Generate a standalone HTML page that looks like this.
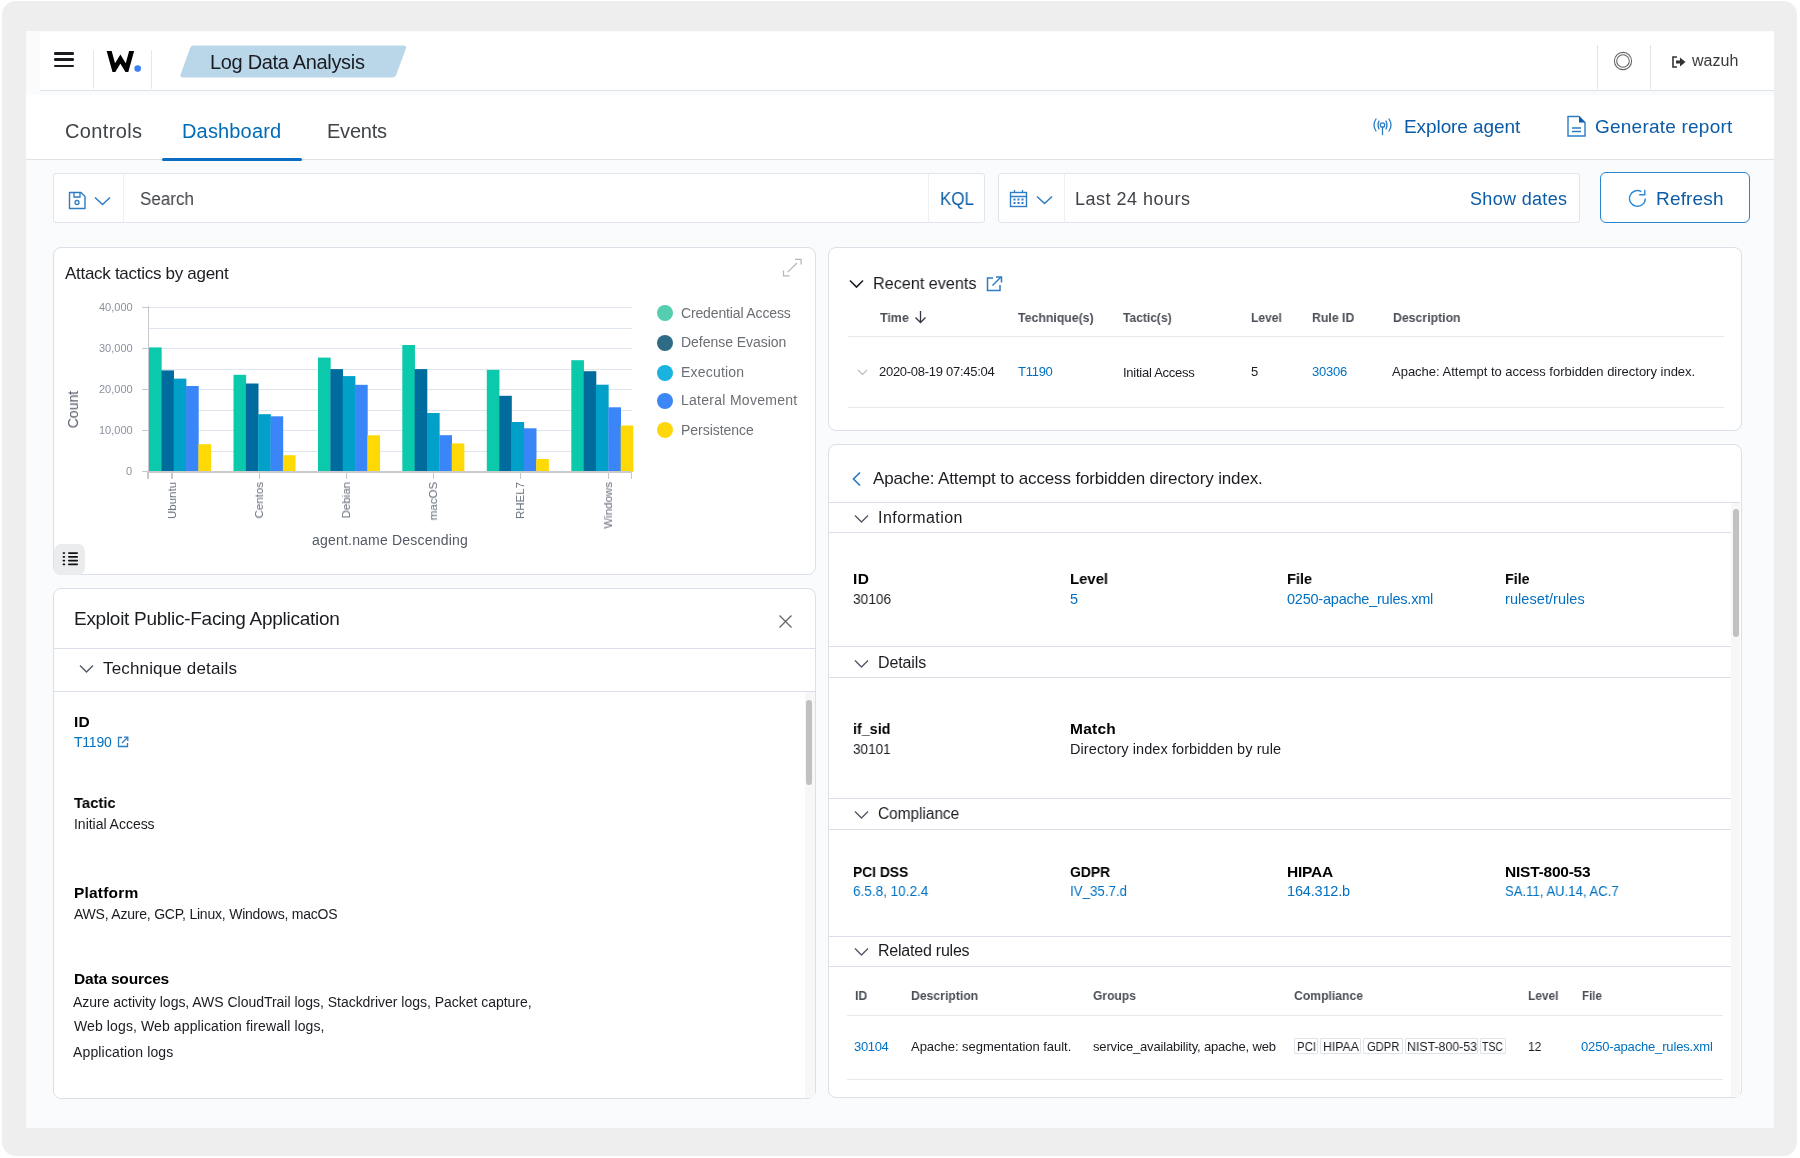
<!DOCTYPE html>
<html><head><meta charset="utf-8"><style>
html,body{margin:0;padding:0;width:1800px;height:1158px;overflow:hidden;background:#fff;font-family:"Liberation Sans", sans-serif;}
span{will-change:transform;}
</style></head><body>
<div style="position:absolute;left:2px;top:1px;width:1795px;height:1155px;background:#eeeeee;border-radius:14px;"></div>
<div style="position:absolute;left:26px;top:31px;width:1748px;height:1097px;background:#fafbfd;border-radius:0px;"></div>
<div style="position:absolute;left:40px;top:32px;width:1734px;height:58px;background:#fff;border-radius:0px;"></div>
<div style="position:absolute;left:40px;top:90px;width:1734px;height:1px;background:#dfe2e6;border-radius:0px;"></div>
<div style="position:absolute;left:93px;top:50px;width:1px;height:39px;background:#e3e7ee;border-radius:0px;"></div>
<div style="position:absolute;left:151px;top:50px;width:1px;height:39px;background:#e3e7ee;border-radius:0px;"></div>
<div style="position:absolute;left:1596.5px;top:45px;width:1.5px;height:44px;background:#e2e2e2;border-radius:0px;"></div>
<div style="position:absolute;left:1649.5px;top:45px;width:1.5px;height:44px;background:#e2e2e2;border-radius:0px;"></div>
<div style="position:absolute;left:54px;top:52px;width:20px;height:2.6000000000000014px;background:#1a1c21;border-radius:1.3px;"></div>
<div style="position:absolute;left:54px;top:58.3px;width:20px;height:2.6000000000000014px;background:#1a1c21;border-radius:1.3px;"></div>
<div style="position:absolute;left:54px;top:64.6px;width:20px;height:2.6000000000000085px;background:#1a1c21;border-radius:1.3px;"></div>
<svg style="position:absolute;left:100px;top:48px;" width="45" height="28" viewBox="0 0 45 28"><defs><clipPath id="wc"><rect x="0" y="3" width="45" height="21"/></clipPath></defs><path clip-path="url(#wc)" d="M8.6 1 L14.2 21.2 L20.4 11 L26.6 21.2 L32.2 1" fill="none" stroke="#000" stroke-width="4.8" stroke-linejoin="miter" stroke-miterlimit="10"/><circle cx="37.7" cy="20.6" r="3.3" fill="#3c7ff2"/></svg>
<svg style="position:absolute;left:178px;top:44px;" width="232" height="36" viewBox="0 0 232 36"><path d="M15.3 1.6 H225.6 Q228.9 1.6 227.9 4.6 L218.2 31 Q217.2 33.6 214.2 33.6 H4.9 Q1.6 33.6 2.6 30.6 L12 4.2 Q12.9 1.6 15.3 1.6Z" fill="#bad7ea"/></svg>
<span id="t0" style="position:absolute;left:210.00px;top:52.00px;font-size:20px;line-height:1;font-weight:400;color:#1a1c21;letter-spacing:-0.325px;white-space:nowrap;">Log Data Analysis</span>
<svg style="position:absolute;left:1612px;top:50px;" width="22" height="22" viewBox="0 0 22 22"><circle cx="11" cy="11" r="8.6" fill="none" stroke="#666" stroke-width="1.1"/><circle cx="11" cy="11" r="6.3" fill="none" stroke="#666" stroke-width="1.1"/></svg>
<svg style="position:absolute;left:1671px;top:55px;" width="16" height="14" viewBox="0 0 16 14"><path d="M6 2 H2 V12 H6" fill="none" stroke="#333" stroke-width="1.6"/><path d="M5 5.5 H9 V2.5 L14.5 7 L9 11.5 V8.5 H5Z" fill="#333"/></svg>
<span id="t1" style="position:absolute;left:1691.70px;top:52.70px;font-size:16px;line-height:1;font-weight:400;color:#3a3a3a;letter-spacing:0.037px;white-space:nowrap;">wazuh</span>
<div style="position:absolute;left:26px;top:95px;width:1748px;height:64px;background:#fff;border-radius:0px;"></div>
<div style="position:absolute;left:26px;top:159px;width:1748px;height:1px;background:#dfe2e6;border-radius:0px;"></div>
<div style="position:absolute;left:162px;top:158px;width:140px;height:3px;background:#0b6cc4;border-radius:1.5px;"></div>
<span id="t2" style="position:absolute;left:65.00px;top:121.30px;font-size:20px;line-height:1;font-weight:400;color:#3f4247;letter-spacing:0.361px;white-space:nowrap;">Controls</span>
<span id="t3" style="position:absolute;left:182.00px;top:121.30px;font-size:20px;line-height:1;font-weight:400;color:#006bb8;letter-spacing:0.160px;white-space:nowrap;">Dashboard</span>
<span id="t4" style="position:absolute;left:327.00px;top:121.30px;font-size:20px;line-height:1;font-weight:400;color:#3f4247;letter-spacing:-0.229px;white-space:nowrap;">Events</span>
<svg style="position:absolute;left:1372px;top:117px;" width="22" height="20" viewBox="0 0 22 20"><g fill="none" stroke="#2d7cc4" stroke-width="1.3" stroke-linecap="round"><path d="M4 2 Q0 8 4 14"/><path d="M7 4 Q5 8 7 12"/><path d="M17 2 Q21 8 17 14"/><path d="M14 4 Q16 8 14 12"/><circle cx="10.5" cy="8" r="2.2"/><path d="M10.5 10.2 V17.5"/></g></svg>
<span id="t5" style="position:absolute;left:1403.75px;top:117.15px;font-size:19px;line-height:1;font-weight:400;color:#0b5ba6;letter-spacing:-0.081px;white-space:nowrap;">Explore agent</span>
<svg style="position:absolute;left:1566px;top:115px;" width="21" height="23" viewBox="0 0 21 23"><path d="M2 1.5 H13 L19 7.5 V21 H2Z" fill="none" stroke="#2d7cc4" stroke-width="1.4"/><path d="M13 1.5 L19 7.5 H13Z" fill="#0b5ba6"/><path d="M6 13 H15 M6 16.5 H15" stroke="#2d7cc4" stroke-width="1.3"/></svg>
<span id="t6" style="position:absolute;left:1595.05px;top:117.15px;font-size:19px;line-height:1;font-weight:400;color:#0b5ba6;letter-spacing:0.225px;white-space:nowrap;">Generate report</span>
<div style="position:absolute;left:53px;top:173px;width:932px;height:50px;background:#fff;border:1px solid #e1e4ea;box-sizing:border-box;border-radius:3px;"></div>
<div style="position:absolute;left:123px;top:174px;width:1px;height:48px;background:#eef0f3;border-radius:0px;"></div>
<div style="position:absolute;left:928px;top:174px;width:1px;height:48px;background:#eef0f3;border-radius:0px;"></div>
<svg style="position:absolute;left:68px;top:191px;" width="19" height="19" viewBox="0 0 19 19"><path d="M1.5 1.5 H13 L17 5.5 V17.5 H1.5Z" fill="none" stroke="#2d7cc4" stroke-width="1.4" stroke-linejoin="round"/><path d="M6 1.5 V6 H12 V1.5" fill="none" stroke="#2d7cc4" stroke-width="1.3"/><circle cx="9" cy="11.5" r="2" fill="none" stroke="#2d7cc4" stroke-width="1.3"/></svg>
<svg style="position:absolute;left:94px;top:196px;" width="17" height="10" viewBox="0 0 17 10"><path d="M1 1.5 L8.5 8.5 L16 1.5" fill="none" stroke="#2d7cc4" stroke-width="1.5"/></svg>
<span id="t7" style="position:absolute;left:140.10px;top:189.50px;font-size:18px;line-height:1;font-weight:400;color:#404348;letter-spacing:0.000px;white-space:nowrap;transform:scaleX(0.9461);transform-origin:0 0;">Search</span>
<span id="t8" style="position:absolute;left:939.50px;top:189.50px;font-size:18px;line-height:1;font-weight:400;color:#0b5ba6;letter-spacing:0.000px;white-space:nowrap;transform:scaleX(0.9427);transform-origin:0 0;">KQL</span>
<div style="position:absolute;left:998px;top:173px;width:582px;height:50px;background:#fff;border:1px solid #e1e4ea;box-sizing:border-box;border-radius:3px;"></div>
<div style="position:absolute;left:1064px;top:174px;width:1px;height:48px;background:#eef0f3;border-radius:0px;"></div>
<svg style="position:absolute;left:1009px;top:189px;" width="19" height="19" viewBox="0 0 19 19"><rect x="1.5" y="3.5" width="16" height="14" fill="none" stroke="#2d7cc4" stroke-width="1.4"/><path d="M1.5 7.5 H17.5 M5.5 1 V4 M13.5 1 V4" stroke="#2d7cc4" stroke-width="1.3"/><g fill="#2d7cc4"><rect x="4.5" y="9.5" width="2" height="2"/><rect x="8.5" y="9.5" width="2" height="2"/><rect x="12.5" y="9.5" width="2" height="2"/><rect x="4.5" y="13" width="2" height="2"/><rect x="8.5" y="13" width="2" height="2"/><rect x="12.5" y="13" width="2" height="2"/></g></svg>
<svg style="position:absolute;left:1036px;top:195px;" width="17" height="10" viewBox="0 0 17 10"><path d="M1 1.5 L8.5 8.5 L16 1.5" fill="none" stroke="#2d7cc4" stroke-width="1.5"/></svg>
<span id="t9" style="position:absolute;left:1075.10px;top:189.50px;font-size:18px;line-height:1;font-weight:400;color:#404348;letter-spacing:0.494px;white-space:nowrap;">Last 24 hours</span>
<span id="t10" style="position:absolute;left:1470.40px;top:189.50px;font-size:18px;line-height:1;font-weight:400;color:#0b5ba6;letter-spacing:0.327px;white-space:nowrap;">Show dates</span>
<div style="position:absolute;left:1600px;top:172px;width:150px;height:51px;background:#fff;border:1.5px solid #2a86d0;box-sizing:border-box;border-radius:6px;"></div>
<svg style="position:absolute;left:1628px;top:188px;" width="20" height="20" viewBox="0 0 20 20"><path d="M13.35 3.56 A7.9 7.9 0 1 0 17.3 10.4" fill="none" stroke="#2d8ad6" stroke-width="1.4"/><path d="M16.8 1.8 V6.8 H11.2" fill="none" stroke="#2d8ad6" stroke-width="1.4"/></svg>
<span id="t11" style="position:absolute;left:1656.45px;top:188.85px;font-size:19px;line-height:1;font-weight:400;color:#0b5ba6;letter-spacing:0.173px;white-space:nowrap;">Refresh</span>
<div style="position:absolute;left:53px;top:247px;width:763px;height:328px;background:#fff;border:1px solid #dbe0e8;box-sizing:border-box;border-radius:8px;"></div>
<span id="t12" style="position:absolute;left:64.95px;top:265.15px;font-size:17px;line-height:1;font-weight:400;color:#1a1c21;letter-spacing:-0.289px;white-space:nowrap;">Attack tactics by agent</span>
<svg style="position:absolute;left:781px;top:258px;" width="22" height="22" viewBox="0 0 22 22"><g fill="none" stroke="#b4b6b9" stroke-width="1.25"><path d="M16 5 L6.6 14.1"/><path d="M13.9 1.3 H20.1 V6.5"/><path d="M2.5 12.5 V17.9 H8.7"/></g></svg>
<div style="position:absolute;left:148px;top:306.7px;width:484px;height:1.1999999999999886px;background:#dfe5ef;border-radius:0px;"></div>
<div style="position:absolute;left:148px;top:327.6px;width:484px;height:1.1999999999999886px;background:#dfe5ef;border-radius:0px;"></div>
<div style="position:absolute;left:148px;top:347.7px;width:484px;height:1.1999999999999886px;background:#dfe5ef;border-radius:0px;"></div>
<div style="position:absolute;left:148px;top:368.6px;width:484px;height:1.1999999999999886px;background:#dfe5ef;border-radius:0px;"></div>
<div style="position:absolute;left:148px;top:388.9px;width:484px;height:1.1999999999999886px;background:#dfe5ef;border-radius:0px;"></div>
<div style="position:absolute;left:148px;top:409.6px;width:484px;height:1.1999999999999886px;background:#dfe5ef;border-radius:0px;"></div>
<div style="position:absolute;left:148px;top:430.1px;width:484px;height:1.1999999999999886px;background:#dfe5ef;border-radius:0px;"></div>
<div style="position:absolute;left:148px;top:450.6px;width:484px;height:1.1999999999999886px;background:#dfe5ef;border-radius:0px;"></div>
<div style="position:absolute;left:147.5px;top:306px;width:1.5px;height:166px;background:#c6c8cc;border-radius:0px;"></div>
<div style="position:absolute;left:142px;top:306.7px;width:6px;height:1.1999999999999886px;background:#c6c8cc;border-radius:0px;"></div>
<div style="position:absolute;left:142px;top:347.7px;width:6px;height:1.1999999999999886px;background:#c6c8cc;border-radius:0px;"></div>
<div style="position:absolute;left:142px;top:388.9px;width:6px;height:1.1999999999999886px;background:#c6c8cc;border-radius:0px;"></div>
<div style="position:absolute;left:142px;top:430.1px;width:6px;height:1.1999999999999886px;background:#c6c8cc;border-radius:0px;"></div>
<div style="position:absolute;left:142px;top:471.1px;width:6px;height:1.1999999999999886px;background:#c6c8cc;border-radius:0px;"></div>
<span style="position:absolute;right:1667.5px;top:301.0px;font-size:11px;line-height:13px;color:#8a919e;white-space:nowrap">40,000</span>
<span style="position:absolute;right:1667.5px;top:342.0px;font-size:11px;line-height:13px;color:#8a919e;white-space:nowrap">30,000</span>
<span style="position:absolute;right:1667.5px;top:383.0px;font-size:11px;line-height:13px;color:#8a919e;white-space:nowrap">20,000</span>
<span style="position:absolute;right:1667.5px;top:424.0px;font-size:11px;line-height:13px;color:#8a919e;white-space:nowrap">10,000</span>
<span style="position:absolute;right:1667.5px;top:465.3px;font-size:11px;line-height:13px;color:#8a919e;white-space:nowrap">0</span>
<svg style="position:absolute;left:140px;top:300px;" width="500" height="180" viewBox="0 0 500 180"><rect x="9.00" y="47.40" width="12.65" height="124.60" fill="#0bc9ab"/><rect x="21.35" y="70.40" width="12.65" height="101.60" fill="#006c9d"/><rect x="33.70" y="78.60" width="12.65" height="93.40" fill="#00a0c9"/><rect x="46.05" y="86.00" width="12.65" height="86.00" fill="#3a86f8"/><rect x="58.40" y="144.20" width="12.65" height="27.80" fill="#fed906"/><rect x="93.50" y="74.80" width="12.65" height="97.20" fill="#0bc9ab"/><rect x="105.85" y="83.50" width="12.65" height="88.50" fill="#006c9d"/><rect x="118.20" y="114.20" width="12.65" height="57.80" fill="#00a0c9"/><rect x="130.55" y="116.30" width="12.65" height="55.70" fill="#3a86f8"/><rect x="142.90" y="155.20" width="12.65" height="16.80" fill="#fed906"/><rect x="178.00" y="57.60" width="12.65" height="114.40" fill="#0bc9ab"/><rect x="190.35" y="69.10" width="12.65" height="102.90" fill="#006c9d"/><rect x="202.70" y="76.10" width="12.65" height="95.90" fill="#00a0c9"/><rect x="215.05" y="84.80" width="12.65" height="87.20" fill="#3a86f8"/><rect x="227.40" y="135.30" width="12.65" height="36.70" fill="#fed906"/><rect x="262.30" y="45.00" width="12.65" height="127.00" fill="#0bc9ab"/><rect x="274.65" y="69.10" width="12.65" height="102.90" fill="#006c9d"/><rect x="287.00" y="113.00" width="12.65" height="59.00" fill="#00a0c9"/><rect x="299.35" y="135.20" width="12.65" height="36.80" fill="#3a86f8"/><rect x="311.70" y="143.40" width="12.65" height="28.60" fill="#fed906"/><rect x="346.80" y="69.90" width="12.65" height="102.10" fill="#0bc9ab"/><rect x="359.15" y="95.80" width="12.65" height="76.20" fill="#006c9d"/><rect x="371.50" y="122.00" width="12.65" height="50.00" fill="#00a0c9"/><rect x="383.85" y="128.30" width="12.65" height="43.70" fill="#3a86f8"/><rect x="396.20" y="159.00" width="12.65" height="13.00" fill="#fed906"/><rect x="431.30" y="60.20" width="12.65" height="111.80" fill="#0bc9ab"/><rect x="443.65" y="71.20" width="12.65" height="100.80" fill="#006c9d"/><rect x="456.00" y="84.70" width="12.65" height="87.30" fill="#00a0c9"/><rect x="468.35" y="107.30" width="12.65" height="64.70" fill="#3a86f8"/><rect x="480.70" y="125.50" width="12.65" height="46.50" fill="#fed906"/></svg>
<div style="position:absolute;left:148px;top:471.2px;width:484px;height:1.3999999999999773px;background:#c9cacc;border-radius:0px;"></div>
<div style="position:absolute;left:147.4px;top:472px;width:1.1999999999999886px;height:7px;background:#c6c8cc;border-radius:0px;"></div>
<div style="position:absolute;left:171.4px;top:472px;width:1.1999999999999886px;height:7px;background:#c6c8cc;border-radius:0px;"></div>
<div style="position:absolute;left:258.7px;top:472px;width:1.1999999999999886px;height:7px;background:#c6c8cc;border-radius:0px;"></div>
<div style="position:absolute;left:345.79999999999995px;top:472px;width:1.1999999999999886px;height:7px;background:#c6c8cc;border-radius:0px;"></div>
<div style="position:absolute;left:432.9px;top:472px;width:1.1999999999999886px;height:7px;background:#c6c8cc;border-radius:0px;"></div>
<div style="position:absolute;left:520.1px;top:472px;width:1.2000000000000455px;height:7px;background:#c6c8cc;border-radius:0px;"></div>
<div style="position:absolute;left:607.6px;top:472px;width:1.2000000000000455px;height:7px;background:#c6c8cc;border-radius:0px;"></div>
<div style="position:absolute;left:630.9px;top:472px;width:1.2000000000000455px;height:7px;background:#c6c8cc;border-radius:0px;"></div>
<span style="position:absolute;left:165.5px;top:482px;width:13px;font-size:11.5px;line-height:13px;color:#69707d;white-space:nowrap;writing-mode:vertical-rl;transform:rotate(180deg);">Ubuntu</span>
<span style="position:absolute;left:252.8px;top:482px;width:13px;font-size:11.5px;line-height:13px;color:#69707d;white-space:nowrap;writing-mode:vertical-rl;transform:rotate(180deg);">Centos</span>
<span style="position:absolute;left:339.9px;top:482px;width:13px;font-size:11.5px;line-height:13px;color:#69707d;white-space:nowrap;writing-mode:vertical-rl;transform:rotate(180deg);">Debian</span>
<span style="position:absolute;left:427.0px;top:482px;width:13px;font-size:11.5px;line-height:13px;color:#69707d;white-space:nowrap;writing-mode:vertical-rl;transform:rotate(180deg);">macOS</span>
<span style="position:absolute;left:514.2px;top:482px;width:13px;font-size:11.5px;line-height:13px;color:#69707d;white-space:nowrap;writing-mode:vertical-rl;transform:rotate(180deg);">RHEL7</span>
<span style="position:absolute;left:601.7px;top:482px;width:13px;font-size:11.5px;line-height:13px;color:#69707d;white-space:nowrap;writing-mode:vertical-rl;transform:rotate(180deg);">Windows</span>
<span style="position:absolute;left:66px;top:391px;width:14px;font-size:14px;line-height:14px;color:#535966;white-space:nowrap;writing-mode:vertical-rl;transform:rotate(180deg);">Count</span>
<span id="t13" style="position:absolute;left:312.30px;top:533.10px;font-size:14px;line-height:1;font-weight:400;color:#535966;letter-spacing:0.201px;white-space:nowrap;">agent.name Descending</span>
<div style="position:absolute;left:657px;top:305.4px;width:16px;height:16.0px;background:#54cdb0;border-radius:8px;"></div>
<span id="t14" style="position:absolute;left:680.80px;top:305.80px;font-size:14px;line-height:1;font-weight:400;color:#6b6e73;letter-spacing:-0.145px;white-space:nowrap;">Credential Access</span>
<div style="position:absolute;left:657px;top:334.8px;width:16px;height:16.0px;background:#2e6b86;border-radius:8px;"></div>
<span id="t15" style="position:absolute;left:680.80px;top:335.20px;font-size:14px;line-height:1;font-weight:400;color:#6b6e73;letter-spacing:-0.032px;white-space:nowrap;">Defense Evasion</span>
<div style="position:absolute;left:657px;top:365px;width:16px;height:16px;background:#1ab3e0;border-radius:8px;"></div>
<span id="t16" style="position:absolute;left:680.80px;top:365.40px;font-size:14px;line-height:1;font-weight:400;color:#6b6e73;letter-spacing:0.200px;white-space:nowrap;">Execution</span>
<div style="position:absolute;left:657px;top:392.8px;width:16px;height:16.0px;background:#3d86f5;border-radius:8px;"></div>
<span id="t17" style="position:absolute;left:680.80px;top:393.20px;font-size:14px;line-height:1;font-weight:400;color:#6b6e73;letter-spacing:0.276px;white-space:nowrap;">Lateral Movement</span>
<div style="position:absolute;left:657px;top:422.2px;width:16px;height:16.0px;background:#fdd60c;border-radius:8px;"></div>
<span id="t18" style="position:absolute;left:680.80px;top:422.60px;font-size:14px;line-height:1;font-weight:400;color:#6b6e73;letter-spacing:-0.036px;white-space:nowrap;">Persistence</span>
<div style="position:absolute;left:53.5px;top:543.5px;width:31.0px;height:31.0px;background:#ebeced;border-radius:7px;"></div>
<svg style="position:absolute;left:60px;top:550px;" width="20" height="18" viewBox="0 0 20 18"><g fill="#111"><rect x="2.6" y="2.2" width="2.6" height="1.7" rx="0.8"/><rect x="2.6" y="6" width="2.6" height="1.7" rx="0.8"/><rect x="2.6" y="9.8" width="2.6" height="1.7" rx="0.8"/><rect x="2.6" y="13.6" width="2.6" height="1.7" rx="0.8"/><rect x="8" y="2.2" width="10" height="1.7" rx="0.8"/><rect x="8" y="6" width="10" height="1.7" rx="0.8"/><rect x="8" y="9.8" width="10" height="1.7" rx="0.8"/><rect x="8" y="13.6" width="10" height="1.7" rx="0.8"/></g></svg>
<div style="position:absolute;left:828px;top:247px;width:914px;height:184px;background:#fff;border:1px solid #dbe0e8;box-sizing:border-box;border-radius:8px;"></div>
<svg style="position:absolute;left:849px;top:279px;" width="15" height="10" viewBox="0 0 15 10"><path d="M1 1.5 L7.5 8 L14 1.5" fill="none" stroke="#1a1c21" stroke-width="1.6"/></svg>
<span id="t19" style="position:absolute;left:873.15px;top:274.85px;font-size:17px;line-height:1;font-weight:400;color:#1a1c21;letter-spacing:0.000px;white-space:nowrap;transform:scaleX(0.9517);transform-origin:0 0;">Recent events</span>
<svg style="position:absolute;left:986px;top:276px;" width="17" height="16" viewBox="0 0 17 16"><g fill="none" stroke="#2d7cc4" stroke-width="1.5"><path d="M7 2 H1.5 V14.5 H14 V9"/><path d="M6.5 9.5 L15 1"/><path d="M10 1 H15.5 V6.5"/></g></svg>
<span id="t20" style="position:absolute;left:880.15px;top:310.95px;font-size:13px;line-height:1;font-weight:700;color:#4a4e56;letter-spacing:0.000px;white-space:nowrap;transform:scaleX(0.9539);transform-origin:0 0;">Time</span>
<span id="t21" style="position:absolute;left:1018.05px;top:310.95px;font-size:13px;line-height:1;font-weight:700;color:#4a4e56;letter-spacing:0.000px;white-space:nowrap;transform:scaleX(0.9472);transform-origin:0 0;">Technique(s)</span>
<span id="t22" style="position:absolute;left:1122.55px;top:310.95px;font-size:13px;line-height:1;font-weight:700;color:#4a4e56;letter-spacing:0.000px;white-space:nowrap;transform:scaleX(0.9259);transform-origin:0 0;">Tactic(s)</span>
<span id="t23" style="position:absolute;left:1251.35px;top:310.95px;font-size:13px;line-height:1;font-weight:700;color:#4a4e56;letter-spacing:0.000px;white-space:nowrap;transform:scaleX(0.9224);transform-origin:0 0;">Level</span>
<span id="t24" style="position:absolute;left:1311.55px;top:310.95px;font-size:13px;line-height:1;font-weight:700;color:#4a4e56;letter-spacing:0.000px;white-space:nowrap;transform:scaleX(0.9438);transform-origin:0 0;">Rule ID</span>
<span id="t25" style="position:absolute;left:1393.35px;top:310.95px;font-size:13px;line-height:1;font-weight:700;color:#4a4e56;letter-spacing:0.000px;white-space:nowrap;transform:scaleX(0.9445);transform-origin:0 0;">Description</span>
<svg style="position:absolute;left:914px;top:310px;" width="13" height="14" viewBox="0 0 13 14"><path d="M6.5 1 V12.5 M1.5 7.5 L6.5 12.5 L11.5 7.5" fill="none" stroke="#343741" stroke-width="1.3"/></svg>
<div style="position:absolute;left:848px;top:336px;width:876px;height:1px;background:#e6e8eb;border-radius:0px;"></div>
<svg style="position:absolute;left:857px;top:369px;" width="11" height="7" viewBox="0 0 11 7"><path d="M1 1 L5.5 5.5 L10 1" fill="none" stroke="#b8bcc4" stroke-width="1.2"/></svg>
<span id="t26" style="position:absolute;left:879.35px;top:365.45px;font-size:13px;line-height:1;font-weight:400;color:#1a1c21;letter-spacing:-0.277px;white-space:nowrap;">2020-08-19 07:45:04</span>
<span id="t27" style="position:absolute;left:1018.05px;top:365.45px;font-size:13px;line-height:1;font-weight:400;color:#0071c2;letter-spacing:-0.267px;white-space:nowrap;">T1190</span>
<span id="t28" style="position:absolute;left:1122.55px;top:366.25px;font-size:13px;line-height:1;font-weight:400;color:#1a1c21;letter-spacing:-0.259px;white-space:nowrap;">Initial Access</span>
<span id="t29" style="position:absolute;left:1251.35px;top:365.45px;font-size:13px;line-height:1;font-weight:400;color:#1a1c21;letter-spacing:0.000px;white-space:nowrap;">5</span>
<span id="t30" style="position:absolute;left:1311.55px;top:365.45px;font-size:13px;line-height:1;font-weight:400;color:#0071c2;letter-spacing:-0.230px;white-space:nowrap;">30306</span>
<span id="t31" style="position:absolute;left:1392.45px;top:365.45px;font-size:13px;line-height:1;font-weight:400;color:#1a1c21;letter-spacing:-0.006px;white-space:nowrap;">Apache: Attempt to access forbidden directory index.</span>
<div style="position:absolute;left:848px;top:407px;width:876px;height:1px;background:#e6e8eb;border-radius:0px;"></div>
<div style="position:absolute;left:828px;top:443.5px;width:914px;height:654.5px;background:#fff;border:1px solid #dbe0e8;box-sizing:border-box;border-radius:8px;"></div>
<svg style="position:absolute;left:851px;top:471px;" width="11" height="16" viewBox="0 0 11 16"><path d="M9 1.5 L2.5 8 L9 14.5" fill="none" stroke="#2d7cc4" stroke-width="1.7"/></svg>
<span id="t32" style="position:absolute;left:873.25px;top:469.55px;font-size:17px;line-height:1;font-weight:400;color:#1a1c21;letter-spacing:-0.139px;white-space:nowrap;">Apache: Attempt to access forbidden directory index.</span>
<div style="position:absolute;left:829px;top:502px;width:911px;height:1px;background:#dbe0e8;border-radius:0px;"></div>
<div style="position:absolute;left:1731px;top:503px;width:9px;height:594px;background:#f7f7f7;border-radius:0px;"></div>
<div style="position:absolute;left:1733px;top:509px;width:6px;height:128px;background:#c1c1c1;border-radius:3px;"></div>
<div style="position:absolute;left:829px;top:532px;width:902px;height:1px;background:#dbe0e8;border-radius:0px;"></div>
<svg style="position:absolute;left:854px;top:513.5px;" width="15" height="10" viewBox="0 0 15 10"><path d="M1 1.5 L7.5 8 L14 1.5" fill="none" stroke="#535966" stroke-width="1.4"/></svg>
<span id="t33" style="position:absolute;left:877.90px;top:509.90px;font-size:16px;line-height:1;font-weight:400;color:#1a1c21;letter-spacing:0.446px;white-space:nowrap;">Information</span>
<div style="position:absolute;left:829px;top:646px;width:902px;height:1px;background:#dbe0e8;border-radius:0px;"></div>
<div style="position:absolute;left:829px;top:677px;width:902px;height:1px;background:#dbe0e8;border-radius:0px;"></div>
<svg style="position:absolute;left:854px;top:658.8px;" width="15" height="10" viewBox="0 0 15 10"><path d="M1 1.5 L7.5 8 L14 1.5" fill="none" stroke="#535966" stroke-width="1.4"/></svg>
<span id="t34" style="position:absolute;left:877.90px;top:655.20px;font-size:16px;line-height:1;font-weight:400;color:#1a1c21;letter-spacing:-0.118px;white-space:nowrap;">Details</span>
<div style="position:absolute;left:829px;top:798px;width:902px;height:1px;background:#dbe0e8;border-radius:0px;"></div>
<div style="position:absolute;left:829px;top:829px;width:902px;height:1px;background:#dbe0e8;border-radius:0px;"></div>
<svg style="position:absolute;left:854px;top:809.9px;" width="15" height="10" viewBox="0 0 15 10"><path d="M1 1.5 L7.5 8 L14 1.5" fill="none" stroke="#535966" stroke-width="1.4"/></svg>
<span id="t35" style="position:absolute;left:877.90px;top:806.30px;font-size:16px;line-height:1;font-weight:400;color:#1a1c21;letter-spacing:0.000px;white-space:nowrap;transform:scaleX(0.9612);transform-origin:0 0;">Compliance</span>
<div style="position:absolute;left:829px;top:936px;width:902px;height:1px;background:#dbe0e8;border-radius:0px;"></div>
<div style="position:absolute;left:829px;top:966px;width:902px;height:1px;background:#dbe0e8;border-radius:0px;"></div>
<svg style="position:absolute;left:854px;top:946.7px;" width="15" height="10" viewBox="0 0 15 10"><path d="M1 1.5 L7.5 8 L14 1.5" fill="none" stroke="#535966" stroke-width="1.4"/></svg>
<span id="t36" style="position:absolute;left:877.90px;top:943.10px;font-size:16px;line-height:1;font-weight:400;color:#1a1c21;letter-spacing:-0.223px;white-space:nowrap;">Related rules</span>
<span id="t37" style="position:absolute;left:853.23px;top:571.33px;font-size:15.5px;line-height:1;font-weight:700;color:#000;letter-spacing:0.494px;white-space:nowrap;">ID</span>
<span id="t38" style="position:absolute;left:853.27px;top:592.47px;font-size:14.5px;line-height:1;font-weight:400;color:#1a1c21;letter-spacing:0.000px;white-space:nowrap;transform:scaleX(0.9439);transform-origin:0 0;">30106</span>
<span id="t39" style="position:absolute;left:1070.42px;top:571.33px;font-size:15.5px;line-height:1;font-weight:700;color:#000;letter-spacing:0.000px;white-space:nowrap;transform:scaleX(0.9601);transform-origin:0 0;">Level</span>
<span id="t40" style="position:absolute;left:1070.48px;top:592.47px;font-size:14.5px;line-height:1;font-weight:400;color:#0071c2;letter-spacing:0.000px;white-space:nowrap;">5</span>
<span id="t41" style="position:absolute;left:1287.22px;top:571.33px;font-size:15.5px;line-height:1;font-weight:700;color:#000;letter-spacing:0.000px;white-space:nowrap;transform:scaleX(0.9394);transform-origin:0 0;">File</span>
<span id="t42" style="position:absolute;left:1287.28px;top:592.47px;font-size:14.5px;line-height:1;font-weight:400;color:#0071c2;letter-spacing:-0.225px;white-space:nowrap;">0250-apache_rules.xml</span>
<span id="t43" style="position:absolute;left:1504.52px;top:571.33px;font-size:15.5px;line-height:1;font-weight:700;color:#000;letter-spacing:0.000px;white-space:nowrap;transform:scaleX(0.9202);transform-origin:0 0;">File</span>
<span id="t44" style="position:absolute;left:1504.58px;top:592.47px;font-size:14.5px;line-height:1;font-weight:400;color:#0071c2;letter-spacing:0.064px;white-space:nowrap;">ruleset/rules</span>
<span id="t45" style="position:absolute;left:853.23px;top:721.33px;font-size:15.5px;line-height:1;font-weight:700;color:#000;letter-spacing:0.000px;white-space:nowrap;transform:scaleX(0.9253);transform-origin:0 0;">if_sid</span>
<span id="t46" style="position:absolute;left:853.27px;top:742.17px;font-size:14.5px;line-height:1;font-weight:400;color:#1a1c21;letter-spacing:0.000px;white-space:nowrap;transform:scaleX(0.9315);transform-origin:0 0;">30101</span>
<span id="t47" style="position:absolute;left:1070.42px;top:721.33px;font-size:15.5px;line-height:1;font-weight:700;color:#000;letter-spacing:0.247px;white-space:nowrap;">Match</span>
<span id="t48" style="position:absolute;left:1070.48px;top:742.17px;font-size:14.5px;line-height:1;font-weight:400;color:#1a1c21;letter-spacing:0.073px;white-space:nowrap;">Directory index forbidden by rule</span>
<span id="t49" style="position:absolute;left:853.23px;top:863.53px;font-size:15.5px;line-height:1;font-weight:700;color:#000;letter-spacing:0.000px;white-space:nowrap;transform:scaleX(0.8900);transform-origin:0 0;">PCI DSS</span>
<span id="t50" style="position:absolute;left:853.27px;top:883.57px;font-size:14.5px;line-height:1;font-weight:400;color:#0071c2;letter-spacing:0.000px;white-space:nowrap;transform:scaleX(0.9347);transform-origin:0 0;">6.5.8, 10.2.4</span>
<span id="t51" style="position:absolute;left:1070.42px;top:863.53px;font-size:15.5px;line-height:1;font-weight:700;color:#000;letter-spacing:0.000px;white-space:nowrap;transform:scaleX(0.8971);transform-origin:0 0;">GDPR</span>
<span id="t52" style="position:absolute;left:1070.48px;top:883.57px;font-size:14.5px;line-height:1;font-weight:400;color:#0071c2;letter-spacing:0.000px;white-space:nowrap;transform:scaleX(0.9178);transform-origin:0 0;">IV_35.7.d</span>
<span id="t53" style="position:absolute;left:1287.22px;top:863.53px;font-size:15.5px;line-height:1;font-weight:700;color:#000;letter-spacing:-0.220px;white-space:nowrap;">HIPAA</span>
<span id="t54" style="position:absolute;left:1287.28px;top:883.57px;font-size:14.5px;line-height:1;font-weight:400;color:#0071c2;letter-spacing:-0.180px;white-space:nowrap;">164.312.b</span>
<span id="t55" style="position:absolute;left:1504.52px;top:863.53px;font-size:15.5px;line-height:1;font-weight:700;color:#000;letter-spacing:-0.226px;white-space:nowrap;">NIST-800-53</span>
<span id="t56" style="position:absolute;left:1504.58px;top:883.57px;font-size:14.5px;line-height:1;font-weight:400;color:#0071c2;letter-spacing:0.000px;white-space:nowrap;transform:scaleX(0.9054);transform-origin:0 0;">SA.11, AU.14, AC.7</span>
<span id="t57" style="position:absolute;left:855.35px;top:989.45px;font-size:13px;line-height:1;font-weight:700;color:#4a4e56;letter-spacing:0.000px;white-space:nowrap;transform:scaleX(0.9515);transform-origin:0 0;">ID</span>
<span id="t58" style="position:absolute;left:910.85px;top:989.45px;font-size:13px;line-height:1;font-weight:700;color:#4a4e56;letter-spacing:0.000px;white-space:nowrap;transform:scaleX(0.9389);transform-origin:0 0;">Description</span>
<span id="t59" style="position:absolute;left:1092.65px;top:989.45px;font-size:13px;line-height:1;font-weight:700;color:#4a4e56;letter-spacing:0.000px;white-space:nowrap;transform:scaleX(0.9284);transform-origin:0 0;">Groups</span>
<span id="t60" style="position:absolute;left:1294.35px;top:989.45px;font-size:13px;line-height:1;font-weight:700;color:#4a4e56;letter-spacing:0.000px;white-space:nowrap;transform:scaleX(0.9366);transform-origin:0 0;">Compliance</span>
<span id="t61" style="position:absolute;left:1527.75px;top:989.45px;font-size:13px;line-height:1;font-weight:700;color:#4a4e56;letter-spacing:0.000px;white-space:nowrap;transform:scaleX(0.9132);transform-origin:0 0;">Level</span>
<span id="t62" style="position:absolute;left:1581.85px;top:989.45px;font-size:13px;line-height:1;font-weight:700;color:#4a4e56;letter-spacing:0.000px;white-space:nowrap;transform:scaleX(0.8843);transform-origin:0 0;">File</span>
<div style="position:absolute;left:847px;top:1015px;width:876px;height:1px;background:#e6e8eb;border-radius:0px;"></div>
<span id="t63" style="position:absolute;left:854.05px;top:1039.95px;font-size:13px;line-height:1;font-weight:400;color:#0071c2;letter-spacing:-0.330px;white-space:nowrap;">30104</span>
<span id="t64" style="position:absolute;left:910.85px;top:1039.95px;font-size:13px;line-height:1;font-weight:400;color:#1a1c21;letter-spacing:-0.033px;white-space:nowrap;">Apache: segmentation fault.</span>
<span id="t65" style="position:absolute;left:1092.65px;top:1039.95px;font-size:13px;line-height:1;font-weight:400;color:#1a1c21;letter-spacing:-0.170px;white-space:nowrap;">service_availability, apache, web</span>
<div style="position:absolute;left:1294.4px;top:1038px;width:24.0px;height:16px;background:#fff;border:1px solid #dfe3ea;box-sizing:border-box;border-radius:1px;"></div>
<span id="t66" style="position:absolute;left:1297.25px;top:1039.95px;font-size:13px;line-height:1;font-weight:400;color:#1a1c21;letter-spacing:0.000px;white-space:nowrap;transform:scaleX(0.8774);transform-origin:0 0;">PCI</span>
<div style="position:absolute;left:1320.4px;top:1038px;width:40.5px;height:16px;background:#fff;border:1px solid #dfe3ea;box-sizing:border-box;border-radius:1px;"></div>
<span id="t67" style="position:absolute;left:1322.75px;top:1039.95px;font-size:13px;line-height:1;font-weight:400;color:#1a1c21;letter-spacing:0.000px;white-space:nowrap;transform:scaleX(0.9418);transform-origin:0 0;">HIPAA</span>
<div style="position:absolute;left:1363.2px;top:1038px;width:40.200000000000045px;height:16px;background:#fff;border:1px solid #dfe3ea;box-sizing:border-box;border-radius:1px;"></div>
<span id="t68" style="position:absolute;left:1366.65px;top:1039.95px;font-size:13px;line-height:1;font-weight:400;color:#1a1c21;letter-spacing:0.000px;white-space:nowrap;transform:scaleX(0.8609);transform-origin:0 0;">GDPR</span>
<div style="position:absolute;left:1405.1px;top:1038px;width:72.80000000000018px;height:16px;background:#fff;border:1px solid #dfe3ea;box-sizing:border-box;border-radius:1px;"></div>
<span id="t69" style="position:absolute;left:1407.05px;top:1039.95px;font-size:13px;line-height:1;font-weight:400;color:#1a1c21;letter-spacing:0.000px;white-space:nowrap;transform:scaleX(0.9493);transform-origin:0 0;">NIST-800-53</span>
<div style="position:absolute;left:1480px;top:1038px;width:25.90000000000009px;height:16px;background:#fff;border:1px solid #dfe3ea;box-sizing:border-box;border-radius:1px;"></div>
<span id="t70" style="position:absolute;left:1481.65px;top:1039.95px;font-size:13px;line-height:1;font-weight:400;color:#1a1c21;letter-spacing:0.000px;white-space:nowrap;transform:scaleX(0.8082);transform-origin:0 0;">TSC</span>
<span id="t71" style="position:absolute;left:1527.75px;top:1039.95px;font-size:13px;line-height:1;font-weight:400;color:#1a1c21;letter-spacing:0.000px;white-space:nowrap;transform:scaleX(0.9206);transform-origin:0 0;">12</span>
<span id="t72" style="position:absolute;left:1581.25px;top:1039.95px;font-size:13px;line-height:1;font-weight:400;color:#0071c2;letter-spacing:-0.162px;white-space:nowrap;">0250-apache_rules.xml</span>
<div style="position:absolute;left:847px;top:1079px;width:876px;height:1px;background:#e6e8eb;border-radius:0px;"></div>
<div style="position:absolute;left:53px;top:588px;width:763px;height:511px;background:#fff;border:1px solid #dbe0e8;box-sizing:border-box;border-radius:8px;"></div>
<span id="t73" style="position:absolute;left:73.65px;top:609.45px;font-size:19px;line-height:1;font-weight:400;color:#1a1c21;letter-spacing:-0.274px;white-space:nowrap;">Exploit Public-Facing Application</span>
<svg style="position:absolute;left:778px;top:614px;" width="15" height="15" viewBox="0 0 15 15"><path d="M1.5 1.5 L13.5 13.5 M13.5 1.5 L1.5 13.5" stroke="#666" stroke-width="1.3"/></svg>
<div style="position:absolute;left:54px;top:648px;width:761px;height:1px;background:#dbe0e8;border-radius:0px;"></div>
<svg style="position:absolute;left:79px;top:664px;" width="15" height="10" viewBox="0 0 15 10"><path d="M1 1.5 L7.5 8 L14 1.5" fill="none" stroke="#535966" stroke-width="1.4"/></svg>
<span id="t74" style="position:absolute;left:103.25px;top:660.05px;font-size:17px;line-height:1;font-weight:400;color:#1a1c21;letter-spacing:0.164px;white-space:nowrap;">Technique details</span>
<div style="position:absolute;left:54px;top:691px;width:761px;height:1px;background:#dbe0e8;border-radius:0px;"></div>
<div style="position:absolute;left:805px;top:692px;width:10px;height:406px;background:#f7f7f7;border-radius:0px;"></div>
<div style="position:absolute;left:806px;top:700px;width:6px;height:85px;background:#c1c1c1;border-radius:3px;"></div>
<span id="t75" style="position:absolute;left:74.22px;top:714.03px;font-size:15.5px;line-height:1;font-weight:700;color:#000;letter-spacing:0.294px;white-space:nowrap;">ID</span>
<span id="t76" style="position:absolute;left:74.30px;top:735.40px;font-size:14px;line-height:1;font-weight:400;color:#0071c2;letter-spacing:-0.218px;white-space:nowrap;">T1190</span>
<svg style="position:absolute;left:117px;top:736px;" width="12" height="12" viewBox="0 0 12 12"><g fill="none" stroke="#2d7cc4" stroke-width="1.3"><path d="M5 1.5 H1.5 V10.5 H10.5 V7"/><path d="M5 7 L10.5 1.5"/><path d="M7 1.2 H10.8 V5"/></g></svg>
<span id="t77" style="position:absolute;left:74.22px;top:795.03px;font-size:15.5px;line-height:1;font-weight:700;color:#000;letter-spacing:0.000px;white-space:nowrap;transform:scaleX(0.9540);transform-origin:0 0;">Tactic</span>
<span id="t78" style="position:absolute;left:74.30px;top:817.30px;font-size:14px;line-height:1;font-weight:400;color:#1a1c21;letter-spacing:-0.023px;white-space:nowrap;">Initial Access</span>
<span id="t79" style="position:absolute;left:74.42px;top:885.33px;font-size:15.5px;line-height:1;font-weight:700;color:#000;letter-spacing:0.187px;white-space:nowrap;">Platform</span>
<span id="t80" style="position:absolute;left:74.30px;top:907.40px;font-size:14px;line-height:1;font-weight:400;color:#1a1c21;letter-spacing:-0.215px;white-space:nowrap;">AWS, Azure, GCP, Linux, Windows, macOS</span>
<span id="t81" style="position:absolute;left:74.22px;top:971.12px;font-size:15.5px;line-height:1;font-weight:700;color:#000;letter-spacing:-0.194px;white-space:nowrap;">Data sources</span>
<span id="t82" style="position:absolute;left:73.40px;top:994.70px;font-size:14px;line-height:1;font-weight:400;color:#1a1c21;letter-spacing:-0.024px;white-space:nowrap;">Azure activity logs, AWS CloudTrail logs, Stackdriver logs, Packet capture,</span>
<span id="t83" style="position:absolute;left:74.30px;top:1019.20px;font-size:14px;line-height:1;font-weight:400;color:#1a1c21;letter-spacing:0.111px;white-space:nowrap;">Web logs, Web application firewall logs,</span>
<span id="t84" style="position:absolute;left:73.30px;top:1044.90px;font-size:14px;line-height:1;font-weight:400;color:#1a1c21;letter-spacing:0.149px;white-space:nowrap;">Application logs</span>
</body></html>
